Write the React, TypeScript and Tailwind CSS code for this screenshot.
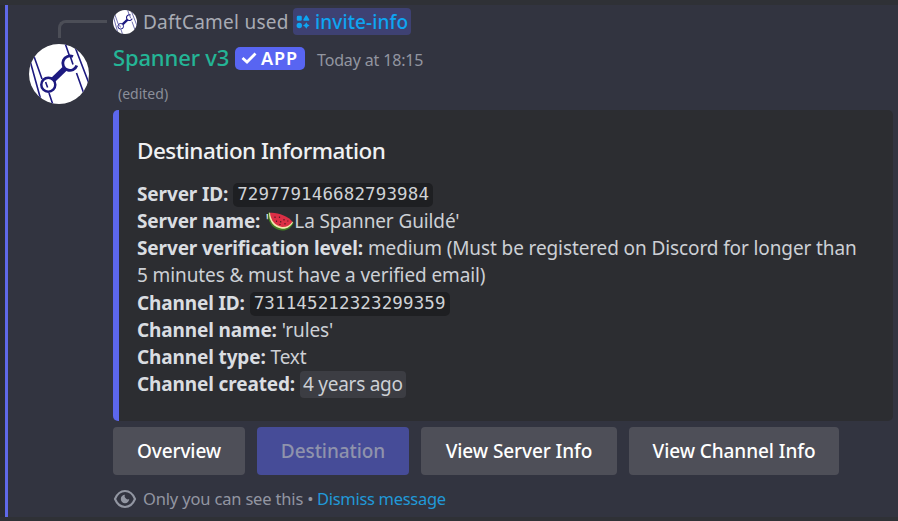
import type { ReactNode } from 'react';

function SpannerAvatar({ className, ring }: { className: string; ring: number }) {
  return (
    <svg viewBox="0 0 60 60" className={className}>
      <defs>
        <clipPath id={`round${ring}`}>
          <circle cx="30" cy="30" r="30" />
        </clipPath>
      </defs>
      <g clipPath={`url(#round${ring})`}>
        <rect width="60" height="60" fill="#fff" />
        <g stroke="#1d1a80" strokeWidth="1.6" fill="none">
          <path d="M0 13 L13 60 M4.5 11 L13 35 M20 49 L24 61 M36 -1 L40.5 12 M46 3 L61 42 M47.5 29 L55 50" />
        </g>
        <path d="M24 36 L37 23.5" stroke="#1d1a80" strokeWidth="5.6" />
        <circle cx="19.3" cy="40.7" r="7" fill="#fff" stroke="#1d1a80" strokeWidth="2.5" />
        <path d="M44 12.6 A7.2 7.2 0 1 0 47.8 21.5" fill="#fff" stroke="#1d1a80" strokeWidth="2.8" />
        <path d="M16.6 38 L18.6 43.5 M41.5 13 L44 20.5" stroke="#1d1a80" strokeWidth="1.6" />
      </g>
    </svg>
  );
}

function AppsIcon() {
  return (
    <svg viewBox="0 0 14 14" className="h-[14px] w-[14px] shrink-0" fill="#0ea5f2">
      <rect x="0.8" y="0.8" width="5" height="5" rx="1.2" />
      <path d="M10.3 0.3 Q10.8 0.3 11.2 1 L13.3 4.6 Q13.6 5.8 12.5 5.8 H8.1 Q7 5.8 7.3 4.6 L9.4 1 Q9.8 0.3 10.3 0.3 Z" />
      <circle cx="3.3" cy="10.5" r="2.7" />
      <path d="M10.3 7.3 L11.5 9.3 L13.6 10.5 L11.5 11.7 L10.3 13.7 L9.1 11.7 L7 10.5 L9.1 9.3 Z" />
    </svg>
  );
}

function Melon() {
  return (
    <svg viewBox="0 0 27 20" className="-ml-[2px] inline-block h-[20px] w-[27px] align-[-4px]">
      <path d="M1.3 0.6 C-0.4 9 6 18.4 15 18.6 C20.5 18.6 25 15.5 26.6 10.5 Z" fill="#3e7d22" />
      <path d="M2.2 0.6 C1.4 9 7 16 15 16.8 C20.5 17 24.4 14 26 10 Z" fill="#f3e6ae" />
      <path d="M3 0.8 C3.6 8 8 14 15 15 C19.5 15.2 23 13.4 25.4 9.8 C22 4.5 10 0 3 0.8 Z" fill="#dc2f45" />
      <path d="M8 4.5v1.5 M12.5 4.5v1.5 M17 7v1.5 M9.5 8.5V10 M13.7 9v1.5 M18 11v1.5 M20.8 8.5v1 M13 12v1" stroke="#5c1a26" strokeWidth="1.2" />
    </svg>
  );
}

function Row({ label, children }: { label: string; children: ReactNode }) {
  return (
    <div className="h-[27.25px] whitespace-nowrap">
      <b className="font-bold tracking-[-0.13px] text-[#dadde1]">{label}</b> {children}
    </div>
  );
}

function Code({ children }: { children: string }) {
  return (
    <code className="inline-block h-6 rounded-[5px] bg-[#1e1f22] px-1 align-[1px] font-['DejaVu_Sans_Mono',monospace] text-[17.5px] leading-[23px] tracking-[0.13px] text-[#cfd2d6]">
      {children}
    </code>
  );
}

function Button({ children, className }: { children: string; className: string }) {
  return (
    <button className={`flex h-12 items-center justify-center rounded-[4px] text-[19px] font-medium tracking-[-0.08px] ${className}`}>
      {children}
    </button>
  );
}

export default function App() {
  return (
    <div className="flex h-[521px] w-[898px] flex-col overflow-hidden bg-[#2f3136] pt-[5px] pb-[4px] font-['Noto_Sans',sans-serif]">
      <div className="flex flex-1 bg-[#323440]">
        <div className="w-[5px] bg-[#2b2d31]" />
        <div className="w-[3px] bg-[#5f69e8]" />
        <div className="ml-[21px] w-[84px] shrink-0">
          <div className="mt-[15px] ml-[29px] h-[18px] w-[49px] rounded-tl-[8px] border-t-[3px] border-l-[3px] border-[#4c4e57]" />
          <SpannerAvatar ring={1} className="mt-[6px] h-[60px] w-[60px]" />
        </div>
        <div className="w-[780px] shrink-0">
          <div className="flex h-[33px] items-center text-[19px] text-[#a8abb4]">
            <SpannerAvatar ring={2} className="mr-[6px] h-[24px] w-[24px]" />
            <span className="w-[150px] pt-[2px] whitespace-nowrap tracking-[0.25px]">DaftCamel used</span>
            <span className="flex h-[27px] w-[118px] items-center gap-[5px] rounded-[4px] bg-[#3e4173] pl-[3px] font-medium whitespace-nowrap text-[#0ea5f2]">
              <AppsIcon />
              <span className="pt-[2px] tracking-[0.12px]">invite-info</span>
            </span>
          </div>
          <div className="flex h-[40px] items-center">
            <span className="w-[122px] pb-[2px] text-[22px] font-medium tracking-[-0.15px] whitespace-nowrap text-[#24b596]">Spanner v3</span>
            <span className="flex h-[23px] w-[70px] items-center rounded-[5px] bg-[#5865f2] pl-[5px] text-[18px] font-semibold tracking-[0.9px] text-white">
              <svg viewBox="0 0 18 14" className="mr-[3px] h-[14px] w-[18px]">
                <path d="M2.5 7 L7 11 L15.5 2.5" fill="none" stroke="#fff" strokeWidth="2.8" />
              </svg>
              APP
            </span>
            <span className="ml-[12px] pt-[3px] text-[16px] tracking-[-0.15px] text-[#9296a0]">Today at 18:15</span>
          </div>
          <div className="flex h-[32px] items-center pb-px pl-[5px] text-[14px] text-[#8b8f9a]">(edited)</div>
          <section className="h-[311px] rounded-[5px] border-l-[6px] border-[#5c67ec] bg-[#2c2d31] pl-[18px] text-[#cdd0d5]">
            <h2 className="pt-[25px] text-[22.5px] leading-[32px] font-medium tracking-[-0.53px] text-[#f0f1f3]">Destination Information</h2>
            <div className="mt-[13.5px] text-[19px] leading-[27.25px] tracking-[-0.11px]">
              <Row label="Server ID:"><Code>729779146682793984</Code></Row>
              <Row label="Server name:">'<Melon />La Spanner Guildé'</Row>
              <Row label="Server verification level:">medium (Must be registered on Discord for longer than</Row>
              <div className="h-[27.25px]">5 minutes &amp; must have a verified email)</div>
              <Row label="Channel ID:"><Code>731145212323299359</Code></Row>
              <Row label="Channel name:">'rules'</Row>
              <Row label="Channel type:">Text</Row>
              <Row label="Channel created:">
                <span className="inline-block h-[27px] rounded-[4px] bg-[#3c3d43] px-[3px] tracking-[-0.25px]">4 years ago</span>
              </Row>
            </div>
          </section>
          <div className="mt-[6px] flex gap-3">
            <Button className="w-[132px] bg-[#4e4f58] text-white">Overview</Button>
            <Button className="w-[152px] bg-[#464c98] text-[#8f93ac]">Destination</Button>
            <Button className="w-[196px] bg-[#4e4f58] text-white">View Server Info</Button>
            <Button className="w-[210px] bg-[#4e4f58] text-white">View Channel Info</Button>
          </div>
          <div className="mt-[12px] flex h-6 items-center text-[16.5px] whitespace-nowrap text-[#9296a2]">
            <svg viewBox="0 0 24 20" className="mr-[6px] h-[20px] w-[24px] shrink-0">
              <path d="M2 10 C6.5 -0.6 17.5 -0.6 22 10 C17.5 20.6 6.5 20.6 2 10 Z" fill="none" stroke="#9296a2" strokeWidth="2.1" />
              <path d="M12 5.8 A4.2 4.2 0 1 0 16.2 10 Q14.8 11 13.2 9.8 Q10.8 8 12 5.8 Z" fill="#9296a2" />
            </svg>
            <span className="w-[174px] tracking-[-0.17px]">Only you can see this •</span>
            <span className="tracking-[-0.3px] text-[#2199d8]">Dismiss message</span>
          </div>
        </div>
      </div>
    </div>
  );
}
